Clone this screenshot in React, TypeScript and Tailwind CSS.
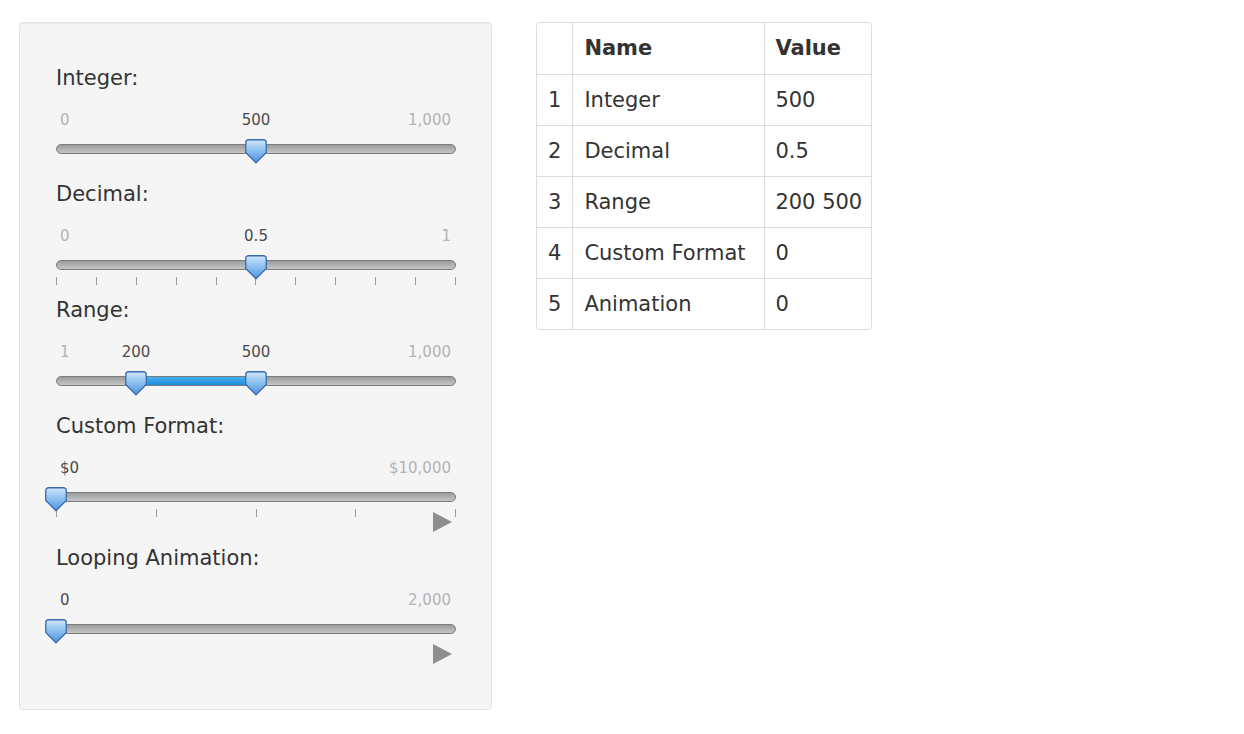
import React from "react";

type Mark = { text: string; at: number; kind: "min" | "max" | "value" };

interface SliderProps {
	label: string;
	marks: Mark[];
	thumbs: number[];
	range?: boolean;
	ticks?: number;
	play?: boolean;
}

const TRACK = 400;

const Thumb: React.FC<{ at: number }> = ({ at }) => (
	<svg
		className="absolute top-[10px]"
		style={{ left: at * TRACK - 11 }}
		width="22"
		height="25"
		viewBox="0 0 22 25"
	>
		<defs>
			<linearGradient id="thumbFill" x1="0" y1="0" x2="0" y2="1">
				<stop offset="0" stopColor="#cfe6fa" />
				<stop offset="0.45" stopColor="#8fc2f0" />
				<stop offset="1" stopColor="#4f93e0" />
			</linearGradient>
		</defs>
		<path
			d="M3.5 0.75 H18.5 A2.75 2.75 0 0 1 21.25 3.5 V13.5 L11 23.75 L0.75 13.5 V3.5 A2.75 2.75 0 0 1 3.5 0.75 Z"
			fill="url(#thumbFill)"
			stroke="#3a69b3"
			strokeWidth="1.3"
		/>
	</svg>
);

const Slider: React.FC<SliderProps> = ({ label, marks, thumbs, range, ticks, play }) => {
	const min = marks.find((m) => m.kind === "min");
	const max = marks.find((m) => m.kind === "max");
	const values = marks.filter((m) => m.kind === "value");

	return (
		<div className={`flex flex-col ${play ? "h-[132px]" : "h-[116px]"}`}>
			<div className="h-[28px] leading-[28px] text-[21px] text-[#333]">{label}</div>

			{/* scale labels */}
			<div className="relative mt-[19px] flex justify-between pl-[4px] pr-[5px] h-[18px] text-[15px] leading-[18px] text-[#b3b3b3]">
				<span>{min?.text}</span>
				<span>{max?.text}</span>
				{values.map((m) => (
					<span
						key={m.text}
						className="absolute top-0 -translate-x-1/2 text-[#4a4a4a]"
						style={{ left: Math.max(m.at * TRACK, 4 + m.text.length * 4.8) }}
					>
						{m.text}
					</span>
				))}
			</div>

			{/* track with handles */}
			<div className="relative h-[32px] pt-[15px]">
				<div className="flex h-[10px] rounded-full border border-[#7c7c7c] bg-gradient-to-b from-[#9c9c9c] to-[#c6c6c6] overflow-hidden">
					{range && thumbs.length === 2 && (
						<>
							<div style={{ width: thumbs[0] * TRACK - 1 }} />
							<div
								className="bg-gradient-to-b from-[#47aef0] to-[#1d8cd8]"
								style={{ width: (thumbs[1] - thumbs[0]) * TRACK }}
							/>
						</>
					)}
				</div>
				{thumbs.map((t, i) => (
					<Thumb key={i} at={t} />
				))}
			</div>

			{ticks && (
				<div className="flex justify-between h-[8px]">
					{Array.from({ length: ticks }).map((_, i) => (
						<div key={i} className="w-px h-full bg-[#9a9a9a]" />
					))}
				</div>
			)}

			{play && (
				<div className={`flex justify-end pr-[4px] ${ticks ? "mt-[-5px]" : "mt-[3px]"}`}>
					<svg width="19" height="20" viewBox="0 0 19 20">
						<polygon points="0,0 19,10 0,20" fill="#8e8e8e" />
					</svg>
				</div>
			)}
		</div>
	);
};

const rows = [
	["1", "Integer", "500"],
	["2", "Decimal", "0.5"],
	["3", "Range", "200 500"],
	["4", "Custom Format", "0"],
	["5", "Animation", "0"],
];

export default function App() {
	return (
		<div className="min-h-[734px] bg-white flex items-start gap-[44px] pt-[22px] pl-[19px] font-['DejaVu_Sans',sans-serif] text-[#333]">
			<div className="w-[473px] bg-[#f5f5f5] border border-[#e3e3e3] rounded-[4px] pt-[41px] pb-[33px] pl-[36px] pr-[35px] shadow-[inset_0_1px_1px_rgba(0,0,0,0.05)]">
				<Slider
					label="Integer:"
					marks={[
						{ text: "0", at: 0, kind: "min" },
						{ text: "500", at: 0.5, kind: "value" },
						{ text: "1,000", at: 1, kind: "max" },
					]}
					thumbs={[0.5]}
				/>
				<Slider
					label="Decimal:"
					marks={[
						{ text: "0", at: 0, kind: "min" },
						{ text: "0.5", at: 0.5, kind: "value" },
						{ text: "1", at: 1, kind: "max" },
					]}
					thumbs={[0.5]}
					ticks={11}
				/>
				<Slider
					label="Range:"
					marks={[
						{ text: "1", at: 0, kind: "min" },
						{ text: "200", at: 0.2, kind: "value" },
						{ text: "500", at: 0.5, kind: "value" },
						{ text: "1,000", at: 1, kind: "max" },
					]}
					thumbs={[0.2, 0.5]}
					range
				/>
				<Slider
					label="Custom Format:"
					marks={[
						{ text: "$0", at: 0, kind: "value" },
						{ text: "$10,000", at: 1, kind: "max" },
					]}
					thumbs={[0]}
					ticks={5}
					play
				/>
				<Slider
					label="Looping Animation:"
					marks={[
						{ text: "0", at: 0, kind: "value" },
						{ text: "2,000", at: 1, kind: "max" },
					]}
					thumbs={[0]}
					play
				/>
			</div>

			<table className="border-separate border-spacing-0 border border-[#dddddd] rounded-[4px] text-[21px] text-[#333]">
				<thead>
					<tr className="h-[51px]">
						<th className="w-[35px] px-[11px] text-left font-bold" />
						<th className="w-[192px] px-[11px] text-left font-bold border-l border-[#dddddd]">Name</th>
						<th className="w-[107px] pl-[10px] pr-[9px] text-left font-bold border-l border-[#dddddd]">Value</th>
					</tr>
				</thead>
				<tbody>
					{rows.map((r) => (
						<tr key={r[0]} className="h-[51px]">
							<td className="px-[11px] pt-[2px] border-t border-[#dddddd] whitespace-nowrap">{r[0]}</td>
							<td className="px-[11px] pt-[2px] border-t border-l border-[#dddddd] whitespace-nowrap">{r[1]}</td>
							<td className="pl-[10px] pr-[9px] pt-[2px] border-t border-l border-[#dddddd] whitespace-nowrap">{r[2]}</td>
						</tr>
					))}
				</tbody>
			</table>
		</div>
	);
}
